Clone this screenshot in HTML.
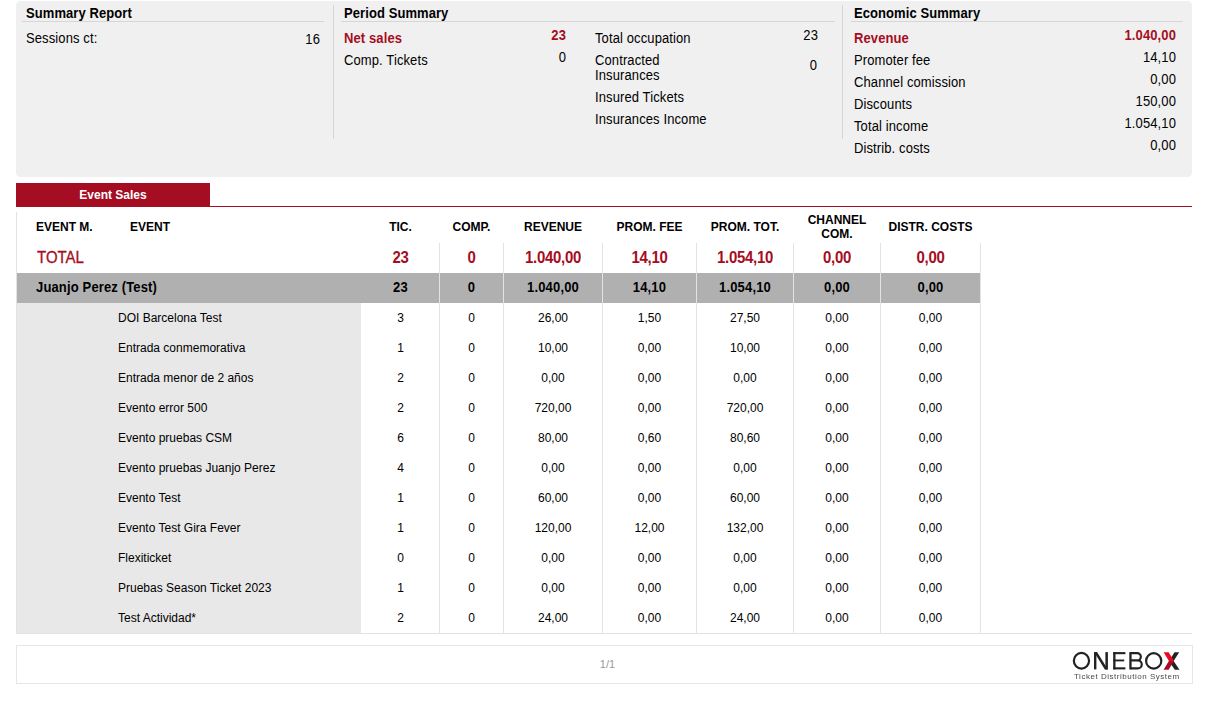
<!DOCTYPE html>
<html><head><meta charset="utf-8">
<style>
*{margin:0;padding:0;box-sizing:border-box}
html,body{width:1219px;height:718px;background:#fff;overflow:hidden}
body{font-family:"Liberation Sans",sans-serif;color:#000;position:relative}
.a{position:absolute;white-space:nowrap;line-height:1}
.c{position:absolute;white-space:nowrap;line-height:1;text-align:center}
.rt{position:absolute;white-space:nowrap;line-height:1;text-align:right}
.sum{position:absolute;left:16px;top:1px;width:1176px;height:176px;background:#f0f0f0;border-radius:4.5px}
.hl{position:absolute;height:1px;background:#d6d6d6}
.vl{position:absolute;width:1px;background:#d6d6d6}
.tv{position:absolute;width:1px;background:#e3e3e3}
.h{font-size:13px;font-weight:bold;letter-spacing:0.08px;transform:scaleY(1.08);transform-origin:0 11px}
.t13{font-size:13px;letter-spacing:0.11px;transform:scaleY(1.08);transform-origin:0 11px}
.red{color:#a50d22}
.b{font-weight:bold}
.th{font-size:12px;font-weight:bold}
.tt{font-size:15px;font-weight:bold;color:#a50d22;letter-spacing:-0.3px;transform:scaleY(1.04);transform-origin:0 12.7px}
.tj{font-size:13px;font-weight:bold;letter-spacing:0.15px;transform:scaleY(1.08);transform-origin:0 11px}
.te{font-size:12px}
</style></head><body>
<div class="sum"></div>
<div class="a h" style="left:26px;top:7px">Summary Report</div>
<div class="hl" style="left:22px;top:21px;width:302px"></div>
<div class="a t13" style="left:26px;top:32px">Sessions ct:</div>
<div class="rt t13" style="right:899px;top:33px">16</div>
<div class="vl" style="left:333px;top:5px;height:134px"></div>
<div class="a h" style="left:344px;top:7px">Period Summary</div>
<div class="hl" style="left:341px;top:21px;width:494px"></div>
<div class="a t13 b red" style="left:344px;top:32px">Net sales</div>
<div class="rt t13 b red" style="right:653px;top:29px">23</div>
<div class="a t13" style="left:344px;top:54px">Comp. Tickets</div>
<div class="rt t13" style="right:653px;top:51px">0</div>
<div class="a t13" style="left:595px;top:32px">Total occupation</div>
<div class="rt t13" style="right:401px;top:29px">23</div>
<div class="a t13" style="left:595px;top:54px">Contracted</div>
<div class="a t13" style="left:595px;top:69px">Insurances</div>
<div class="rt t13" style="right:402px;top:59px">0</div>
<div class="a t13" style="left:595px;top:91px">Insured Tickets</div>
<div class="a t13" style="left:595px;top:113px">Insurances Income</div>
<div class="vl" style="left:842px;top:5px;height:134px"></div>
<div class="a h" style="left:854px;top:7px">Economic Summary</div>
<div class="hl" style="left:851px;top:21px;width:332px"></div>
<div class="a t13 b red" style="left:854px;top:32px">Revenue</div>
<div class="rt t13 b red" style="right:43px;top:29px">1.040,00</div>
<div class="a t13" style="left:854px;top:54px">Promoter fee</div>
<div class="rt t13" style="right:43px;top:51px">14,10</div>
<div class="a t13" style="left:854px;top:76px">Channel comission</div>
<div class="rt t13" style="right:43px;top:73px">0,00</div>
<div class="a t13" style="left:854px;top:98px">Discounts</div>
<div class="rt t13" style="right:43px;top:95px">150,00</div>
<div class="a t13" style="left:854px;top:120px">Total income</div>
<div class="rt t13" style="right:43px;top:117px">1.054,10</div>
<div class="a t13" style="left:854px;top:142px">Distrib. costs</div>
<div class="rt t13" style="right:43px;top:139px">0,00</div>
<div style="position:absolute;left:16px;top:183px;width:194px;height:24px;background:#a50d22"></div>
<div style="position:absolute;left:16px;top:206px;width:1176px;height:1px;background:#a50d22"></div>
<div class="c" style="left:16px;top:189px;width:194px;font-size:12px;font-weight:bold;color:#fff">Event Sales</div>
<div class="a th" style="left:36px;top:221px">EVENT M.</div>
<div class="a th" style="left:130px;top:221px">EVENT</div>
<div class="c th" style="left:362px;top:221px;width:77px">TIC.</div>
<div class="c th" style="left:440px;top:221px;width:63px">COMP.</div>
<div class="c th" style="left:504px;top:221px;width:98px">REVENUE</div>
<div class="c th" style="left:603px;top:221px;width:93px">PROM. FEE</div>
<div class="c th" style="left:697px;top:221px;width:96px">PROM. TOT.</div>
<div class="c th" style="left:794px;top:214px;width:86px">CHANNEL</div>
<div class="c th" style="left:794px;top:228px;width:86px">COM.</div>
<div class="c th" style="left:881px;top:221px;width:99px">DISTR. COSTS</div>
<div style="position:absolute;left:17px;top:273px;width:963px;height:30px;background:#b0b0b0"></div>
<div style="position:absolute;left:17px;top:303px;width:344px;height:330px;background:#e8e8e8"></div>
<div class="tv" style="left:16px;top:212px;height:421px"></div>
<div class="tv" style="left:439px;top:243px;height:390px"></div>
<div class="tv" style="left:503px;top:243px;height:390px"></div>
<div class="tv" style="left:602px;top:243px;height:390px"></div>
<div class="tv" style="left:696px;top:243px;height:390px"></div>
<div class="tv" style="left:793px;top:243px;height:390px"></div>
<div class="tv" style="left:880px;top:243px;height:390px"></div>
<div class="tv" style="left:980px;top:243px;height:390px"></div>
<div style="position:absolute;left:16px;top:633px;width:1176px;height:1px;background:#e3e3e3"></div>
<div class="a" style="left:37px;top:250px;font-size:15px;color:#a50d22;-webkit-text-stroke:0.3px #a50d22;transform:scaleY(1.06);transform-origin:0 12.7px">TOTAL</div>
<div class="c tt" style="left:362px;top:250px;width:77px">23</div>
<div class="c tt" style="left:440px;top:250px;width:63px">0</div>
<div class="c tt" style="left:504px;top:250px;width:98px">1.040,00</div>
<div class="c tt" style="left:603px;top:250px;width:93px">14,10</div>
<div class="c tt" style="left:697px;top:250px;width:96px">1.054,10</div>
<div class="c tt" style="left:794px;top:250px;width:86px">0,00</div>
<div class="c tt" style="left:881px;top:250px;width:99px">0,00</div>
<div class="a tj" style="left:36px;top:281px">Juanjo Perez (Test)</div>
<div class="c tj" style="left:362px;top:281px;width:77px">23</div>
<div class="c tj" style="left:440px;top:281px;width:63px">0</div>
<div class="c tj" style="left:504px;top:281px;width:98px">1.040,00</div>
<div class="c tj" style="left:603px;top:281px;width:93px">14,10</div>
<div class="c tj" style="left:697px;top:281px;width:96px">1.054,10</div>
<div class="c tj" style="left:794px;top:281px;width:86px">0,00</div>
<div class="c tj" style="left:881px;top:281px;width:99px">0,00</div>
<div class="a te" style="left:118px;top:312px">DOI Barcelona Test</div>
<div class="c te" style="left:362px;top:312px;width:77px">3</div>
<div class="c te" style="left:440px;top:312px;width:63px">0</div>
<div class="c te" style="left:504px;top:312px;width:98px">26,00</div>
<div class="c te" style="left:603px;top:312px;width:93px">1,50</div>
<div class="c te" style="left:697px;top:312px;width:96px">27,50</div>
<div class="c te" style="left:794px;top:312px;width:86px">0,00</div>
<div class="c te" style="left:881px;top:312px;width:99px">0,00</div>
<div class="a te" style="left:118px;top:342px">Entrada conmemorativa</div>
<div class="c te" style="left:362px;top:342px;width:77px">1</div>
<div class="c te" style="left:440px;top:342px;width:63px">0</div>
<div class="c te" style="left:504px;top:342px;width:98px">10,00</div>
<div class="c te" style="left:603px;top:342px;width:93px">0,00</div>
<div class="c te" style="left:697px;top:342px;width:96px">10,00</div>
<div class="c te" style="left:794px;top:342px;width:86px">0,00</div>
<div class="c te" style="left:881px;top:342px;width:99px">0,00</div>
<div class="a te" style="left:118px;top:372px">Entrada menor de 2 años</div>
<div class="c te" style="left:362px;top:372px;width:77px">2</div>
<div class="c te" style="left:440px;top:372px;width:63px">0</div>
<div class="c te" style="left:504px;top:372px;width:98px">0,00</div>
<div class="c te" style="left:603px;top:372px;width:93px">0,00</div>
<div class="c te" style="left:697px;top:372px;width:96px">0,00</div>
<div class="c te" style="left:794px;top:372px;width:86px">0,00</div>
<div class="c te" style="left:881px;top:372px;width:99px">0,00</div>
<div class="a te" style="left:118px;top:402px">Evento error 500</div>
<div class="c te" style="left:362px;top:402px;width:77px">2</div>
<div class="c te" style="left:440px;top:402px;width:63px">0</div>
<div class="c te" style="left:504px;top:402px;width:98px">720,00</div>
<div class="c te" style="left:603px;top:402px;width:93px">0,00</div>
<div class="c te" style="left:697px;top:402px;width:96px">720,00</div>
<div class="c te" style="left:794px;top:402px;width:86px">0,00</div>
<div class="c te" style="left:881px;top:402px;width:99px">0,00</div>
<div class="a te" style="left:118px;top:432px">Evento pruebas CSM</div>
<div class="c te" style="left:362px;top:432px;width:77px">6</div>
<div class="c te" style="left:440px;top:432px;width:63px">0</div>
<div class="c te" style="left:504px;top:432px;width:98px">80,00</div>
<div class="c te" style="left:603px;top:432px;width:93px">0,60</div>
<div class="c te" style="left:697px;top:432px;width:96px">80,60</div>
<div class="c te" style="left:794px;top:432px;width:86px">0,00</div>
<div class="c te" style="left:881px;top:432px;width:99px">0,00</div>
<div class="a te" style="left:118px;top:462px">Evento pruebas Juanjo Perez</div>
<div class="c te" style="left:362px;top:462px;width:77px">4</div>
<div class="c te" style="left:440px;top:462px;width:63px">0</div>
<div class="c te" style="left:504px;top:462px;width:98px">0,00</div>
<div class="c te" style="left:603px;top:462px;width:93px">0,00</div>
<div class="c te" style="left:697px;top:462px;width:96px">0,00</div>
<div class="c te" style="left:794px;top:462px;width:86px">0,00</div>
<div class="c te" style="left:881px;top:462px;width:99px">0,00</div>
<div class="a te" style="left:118px;top:492px">Evento Test</div>
<div class="c te" style="left:362px;top:492px;width:77px">1</div>
<div class="c te" style="left:440px;top:492px;width:63px">0</div>
<div class="c te" style="left:504px;top:492px;width:98px">60,00</div>
<div class="c te" style="left:603px;top:492px;width:93px">0,00</div>
<div class="c te" style="left:697px;top:492px;width:96px">60,00</div>
<div class="c te" style="left:794px;top:492px;width:86px">0,00</div>
<div class="c te" style="left:881px;top:492px;width:99px">0,00</div>
<div class="a te" style="left:118px;top:522px">Evento Test Gira Fever</div>
<div class="c te" style="left:362px;top:522px;width:77px">1</div>
<div class="c te" style="left:440px;top:522px;width:63px">0</div>
<div class="c te" style="left:504px;top:522px;width:98px">120,00</div>
<div class="c te" style="left:603px;top:522px;width:93px">12,00</div>
<div class="c te" style="left:697px;top:522px;width:96px">132,00</div>
<div class="c te" style="left:794px;top:522px;width:86px">0,00</div>
<div class="c te" style="left:881px;top:522px;width:99px">0,00</div>
<div class="a te" style="left:118px;top:552px">Flexiticket</div>
<div class="c te" style="left:362px;top:552px;width:77px">0</div>
<div class="c te" style="left:440px;top:552px;width:63px">0</div>
<div class="c te" style="left:504px;top:552px;width:98px">0,00</div>
<div class="c te" style="left:603px;top:552px;width:93px">0,00</div>
<div class="c te" style="left:697px;top:552px;width:96px">0,00</div>
<div class="c te" style="left:794px;top:552px;width:86px">0,00</div>
<div class="c te" style="left:881px;top:552px;width:99px">0,00</div>
<div class="a te" style="left:118px;top:582px">Pruebas Season Ticket 2023</div>
<div class="c te" style="left:362px;top:582px;width:77px">1</div>
<div class="c te" style="left:440px;top:582px;width:63px">0</div>
<div class="c te" style="left:504px;top:582px;width:98px">0,00</div>
<div class="c te" style="left:603px;top:582px;width:93px">0,00</div>
<div class="c te" style="left:697px;top:582px;width:96px">0,00</div>
<div class="c te" style="left:794px;top:582px;width:86px">0,00</div>
<div class="c te" style="left:881px;top:582px;width:99px">0,00</div>
<div class="a te" style="left:118px;top:612px">Test Actividad*</div>
<div class="c te" style="left:362px;top:612px;width:77px">2</div>
<div class="c te" style="left:440px;top:612px;width:63px">0</div>
<div class="c te" style="left:504px;top:612px;width:98px">24,00</div>
<div class="c te" style="left:603px;top:612px;width:93px">0,00</div>
<div class="c te" style="left:697px;top:612px;width:96px">24,00</div>
<div class="c te" style="left:794px;top:612px;width:86px">0,00</div>
<div class="c te" style="left:881px;top:612px;width:99px">0,00</div>
<div style="position:absolute;left:16px;top:645px;width:1177px;height:39px;border:1px solid #e6e6e6"></div>
<div class="c" style="left:16px;top:659px;width:1183px;font-size:11px;color:#999">1/1</div>
<svg style="position:absolute;left:0;top:0" width="1219" height="718" viewBox="0 0 1219 718">
<g fill="none" stroke="#222" stroke-width="2.2">
<ellipse cx="1081.45" cy="660.8" rx="7.6" ry="7.85"/>
<ellipse cx="1153.7" cy="660.9" rx="7.6" ry="7.7"/>
<path d="M1130.45,653.15 H1137.2 A3.65,3.65 0 0 1 1137.2,660.45 H1130.45 M1130.45,660.45 H1137.8 A3.95,3.95 0 0 1 1137.8,668.35 H1130.45"/>
</g>
<g fill="#222">
<rect x="1094" y="652.1" width="2.4" height="17.3"/>
<rect x="1105.4" y="652.1" width="2.5" height="17.3"/>
<polygon points="1094,652.1 1097,652.1 1107.9,669.4 1104.9,669.4"/>
<rect x="1113.2" y="652.1" width="2.3" height="17.3"/>
<rect x="1113.2" y="652.1" width="12.2" height="2.1"/>
<rect x="1113.2" y="659.5" width="11" height="1.9"/>
<rect x="1113.2" y="667.3" width="12.2" height="2.1"/>
<rect x="1129.3" y="652.1" width="2.3" height="17.3"/>
<polygon points="1174.6,652.3 1179.2,652.3 1173.6,661 1168.9,661"/>
<polygon points="1168.9,661 1173.6,661 1179.5,669.7 1174.8,669.7"/>
</g>
<polygon fill="#ea0a22" points="1163.6,652.3 1168.6,652.3 1174.1,660.9 1168.9,660.9"/>
<polygon fill="#a50d22" points="1168.9,660.9 1174.1,660.9 1168.6,669.7 1163.6,669.7"/>
</svg>
<div class="a" style="left:1074px;top:673px;font-size:8px;letter-spacing:0.52px;color:#4a4a4a;transform:translateZ(0)">Ticket Distribution System</div>
</body></html>
